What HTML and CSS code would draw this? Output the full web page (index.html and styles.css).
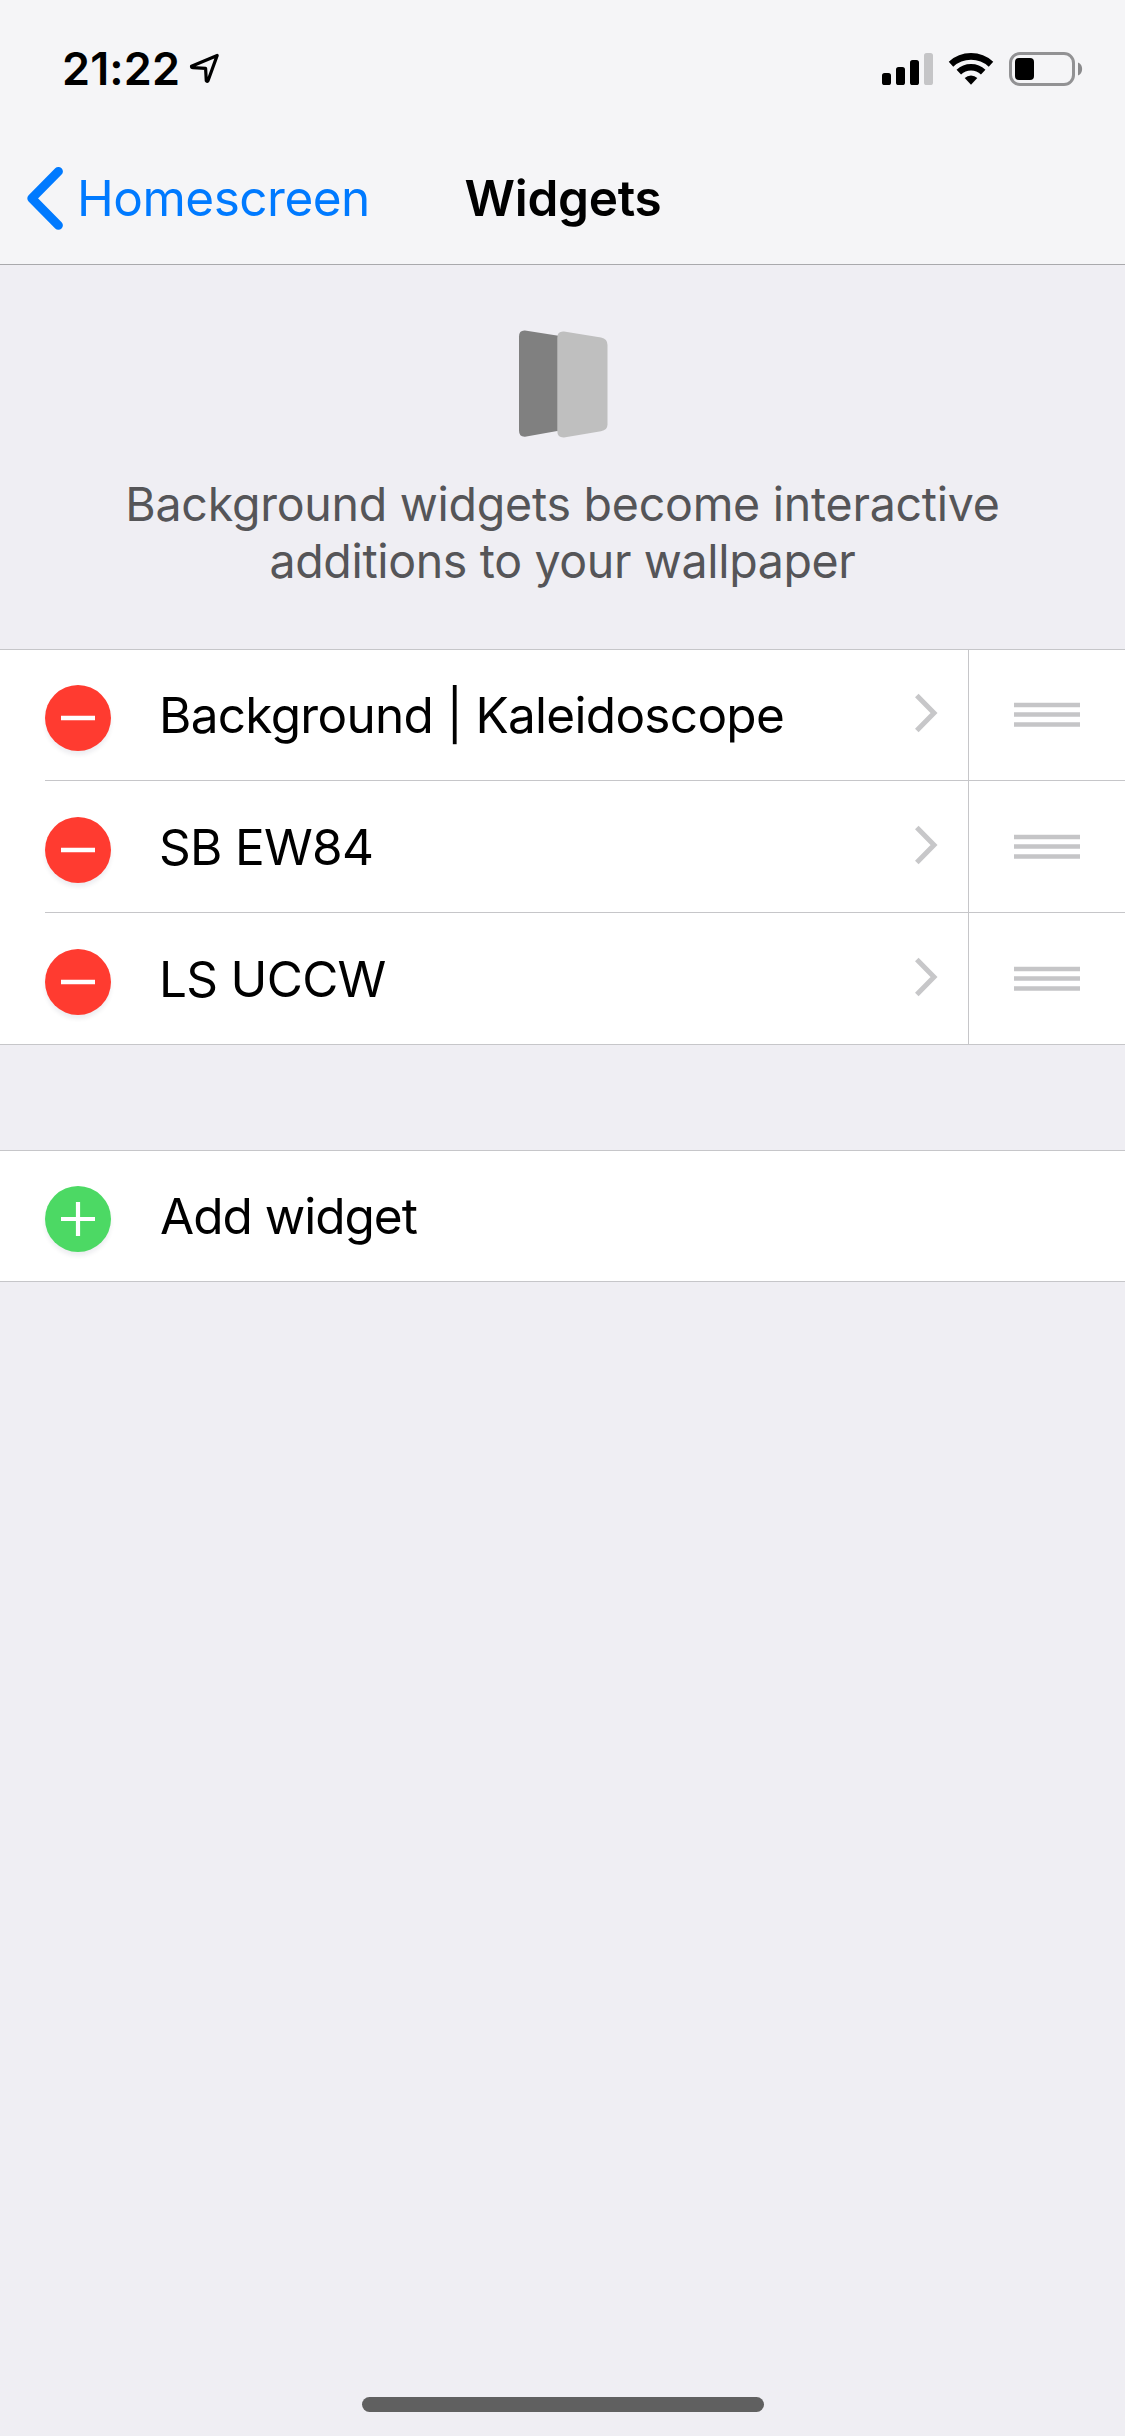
FILE: index.html
```html
<!DOCTYPE html>
<html lang="en">
<head>
<meta charset="utf-8">
<title>Widgets</title>
<link rel="stylesheet" href="styles.css">
</head>
<body>
<div class="screen">
  <header class="header">
    <div class="status">
      <span class="time">21:22</span>
      <svg class="location" width="32" height="32" viewBox="188 52 32 32"><path d="M217.2 55.400 191.500 66.200Q191.500 67.500 193 67.600L205.600 68.400 206.300 80.800Q207 82 208 80.800Z" fill="none" stroke="#000" stroke-width="3.200" stroke-linejoin="round"/></svg>
      <svg class="indicators" width="204" height="36" viewBox="880 51 204 36">
        <rect x="882" y="73" width="9" height="12" rx="2.6"/>
        <rect x="896" y="67" width="9" height="18" rx="2.6"/>
        <rect x="910" y="60" width="9" height="25" rx="2.6"/>
        <rect x="924" y="53" width="9" height="32" rx="2.6" fill="#c5c5c7"/>
        <path d="M951 64.2A29.5 29.5 0 0 1 991 64.2M958.8 72.1A17.8 17.8 0 0 1 983.2 72.1" fill="none" stroke="#000" stroke-width="6.6"/>
        <path d="M964.7 78A9 9 0 0 1 977.3 78L971 84.8Z"/>
        <rect x="1010.5" y="53.5" width="63" height="31" rx="9.5" fill="none" stroke="#929294" stroke-width="3"/>
        <rect x="1015" y="58" width="19" height="22" rx="4"/>
        <path d="M1078 62.5C1083.5 64.5 1083.5 73.5 1078 75.5Z" fill="#8a8a8c"/>
      </svg>
    </div>
    <nav class="nav">
      <a class="back">
        <svg width="38" height="66" viewBox="25 165 38 66"><path d="M58.4 171.4 31.8 198.3 58.4 225.3" fill="none" stroke="#007aff" stroke-width="9" stroke-linecap="round" stroke-linejoin="round"/></svg>
        <span>Homescreen</span>
      </a>
      <h1 class="title">Widgets</h1>
    </nav>
  </header>
  <section class="intro">
    <svg class="panels" width="92" height="110" viewBox="517 329 92 110">
      <path d="M525 330.4 560 336V430.5L525 436.700Q519 437 519 430.5V336.5Q519 330 525 330.4Z" fill="#808080"/>
      <path d="M564 331.6 601 337.4Q607.5 338.5 607.5 345V424.5Q607.5 430 601 431.2L564 437.5Q557.3 437.8 557.3 431V338Q557.3 331 564 331.6Z" fill="#bfbfbf"/>
    </svg>
    <p class="lead">Background widgets become interactive<br><span class="second">additions to your wallpaper</span></p>
  </section>
  <ul class="list">
    <li class="row">
      <span class="badge"><svg width="34" height="34" viewBox="0 0 34 34"><path d="M0 17H34" stroke="#fff" stroke-width="4.5"/></svg></span>
      <span class="label">Background | Kaleidoscope</span>
      <svg class="chevron" width="26" height="42" viewBox="0 0 26 42"><path d="M2.8 3.5 20 21 2.8 38.5" fill="none" stroke="#c7c7c9" stroke-width="5"/></svg>
      <span class="grip"><svg width="66" height="26" viewBox="0 0 66 26"><path d="M0 3H66M0 12.5H66M0 22.5H66" stroke="#c5c5c7" stroke-width="4.4"/></svg></span>
    </li>
    <li class="row">
      <span class="badge"><svg width="34" height="34" viewBox="0 0 34 34"><path d="M0 17H34" stroke="#fff" stroke-width="4.5"/></svg></span>
      <span class="label">SB EW84</span>
      <svg class="chevron" width="26" height="42" viewBox="0 0 26 42"><path d="M2.8 3.5 20 21 2.8 38.5" fill="none" stroke="#c7c7c9" stroke-width="5"/></svg>
      <span class="grip"><svg width="66" height="26" viewBox="0 0 66 26"><path d="M0 3H66M0 12.5H66M0 22.5H66" stroke="#c5c5c7" stroke-width="4.4"/></svg></span>
    </li>
    <li class="row">
      <span class="badge"><svg width="34" height="34" viewBox="0 0 34 34"><path d="M0 17H34" stroke="#fff" stroke-width="4.5"/></svg></span>
      <span class="label">LS UCCW</span>
      <svg class="chevron" width="26" height="42" viewBox="0 0 26 42"><path d="M2.8 3.5 20 21 2.8 38.5" fill="none" stroke="#c7c7c9" stroke-width="5"/></svg>
      <span class="grip"><svg width="66" height="26" viewBox="0 0 66 26"><path d="M0 3H66M0 12.5H66M0 22.5H66" stroke="#c5c5c7" stroke-width="4.4"/></svg></span>
    </li>
  </ul>
  <ul class="list add">
    <li class="row">
      <span class="badge green"><svg width="34" height="34" viewBox="0 0 34 34"><path d="M0 17H34M17 0V34" stroke="#fff" stroke-width="4.2"/></svg></span>
      <span class="label">Add widget</span>
    </li>
  </ul>
  <div class="home"></div>
</div>
</body>
</html>
```
FILE: styles.css
```css
* { box-sizing: border-box; margin: 0; padding: 0; }
body { background: #efeef3; font-family: Inter, "Liberation Sans", sans-serif; color: #000; }
.screen { display: flex; flex-direction: column; width: 1125px; height: 2436px; background: #efeef3; }
.header { display: flex; flex-direction: column; height: 265px; background: #f5f5f7; border-bottom: 1px solid #a9a9ac; }
.status { display: flex; align-items: flex-start; height: 132px; padding: 51px 41px 0 62px; }
.time { width: 126px; font-size: 45px; font-weight: 600; line-height: 36px; letter-spacing: .15px; white-space: nowrap; }
.location { display: block; margin-top: 1px; }
.indicators { display: block; margin-left: auto; }
.nav { display: grid; grid-template-columns: 1fr auto 1fr; align-items: center; height: 132px; padding: 0 24px 0 25px; font-size: 49.5px; line-height: 60px; }
.back { display: flex; align-items: center; gap: 14px; color: #007aff; letter-spacing: -.5px; }
.title { font-size: 49.5px; font-weight: 600; letter-spacing: -.25px; }
.intro { display: flex; flex-direction: column; align-items: center; height: 384px; padding-top: 64px; color: #555558; }
.lead { margin-top: 37px; font-size: 46.5px; line-height: 57px; letter-spacing: -.25px; text-align: center; white-space: nowrap; }
.second { letter-spacing: -.35px; }
.list { list-style: none; background: #fff; border-top: 1px solid #c6c6c9; border-bottom: 1px solid #c6c6c9; }
.add { margin-top: 105px; }
.row { display: flex; align-items: center; height: 130px; margin-left: 45px; }
.row + .row { height: 132px; padding-top: 1px; border-top: 1px solid #c6c6c9; }
.badge { display: grid; place-items: center; width: 66px; height: 66px; margin-top: 6px; border-radius: 50%; background: #ff3b30; box-shadow: 0 4px 4px rgba(0, 20, 60, .07); }
.green { background: #4cd964; }
.label { flex: 1; padding-left: 48px; font-size: 49.5px; line-height: 60px; letter-spacing: -.7px; white-space: nowrap; }
.add .label { padding-left: 49px; letter-spacing: -1px; }
.chevron { margin: -4px 28px 0 0; }
.grip { display: grid; place-items: center; align-self: stretch; width: 157px; border-left: 1px solid #c6c6c9; }
.row + .row .grip { margin-top: -1px; padding-top: 1px; }
.home { width: 402px; height: 15px; margin: auto auto 24px; border-radius: 8px; background: #606060; }
```
